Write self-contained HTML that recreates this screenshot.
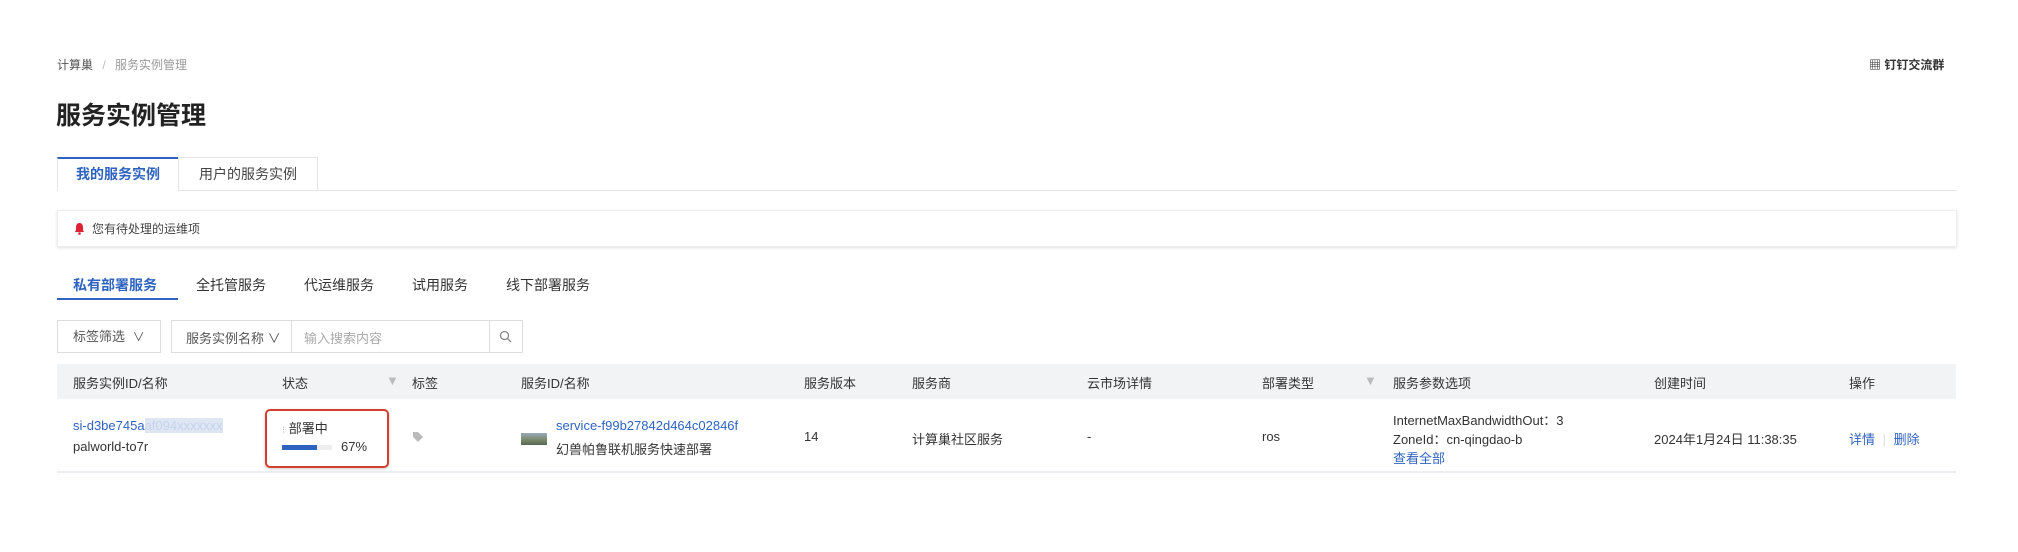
<!DOCTYPE html>
<html><head><meta charset="utf-8"><style>
*{margin:0;padding:0;box-sizing:border-box}
body{width:2018px;height:552px;background:#fff;font-family:"Liberation Sans","Noto Sans CJK SC",sans-serif;color:#333;position:relative;overflow:hidden;font-size:13px}
.a{position:absolute;white-space:nowrap}
.blue{color:#2e63c0}
.gray{color:#888}
</style></head><body>
<div class="a" style="left:57px;top:56px;font-size:12px;color:#555">计算巢 <span style="color:#bbb;margin:0 6px">/</span> <span style="color:#999">服务实例管理</span></div>
<div class="a" style="left:1869px;top:56px;font-size:12px;color:#333;font-weight:bold">▦ 钉钉交流群</div>
<div class="a" style="left:56px;top:96px;font-size:25px;color:#222;font-weight:bold">服务实例管理</div>
<!-- tabs -->
<div class="a" style="left:57px;top:190px;width:1900px;border-top:1px solid #e4e4e4"></div>
<div class="a" style="left:57px;top:157px;width:121px;height:34px;border-top:2px solid #2e63c0;background:#fff;border-left:1px solid #e4e4e4;font-size:14px;text-align:center;line-height:31px;color:#2e63c0;font-weight:bold">我的服务实例</div>
<div class="a" style="left:178px;top:157px;width:140px;height:33px;border:1px solid #e4e4e4;border-bottom:none;font-size:14px;text-align:center;line-height:32px;color:#444">用户的服务实例</div>
<!-- alert -->
<div class="a" style="left:57px;top:210px;width:1900px;height:37px;border:1px solid #eee;box-shadow:0 1px 3px rgba(0,0,0,.12);font-size:12px;line-height:36px;padding-left:34px;color:#444">您有待处理的运维项</div>
<svg class="a" style="left:74px;top:222px" width="11" height="13"><path d="M5.5 1C3 1 2 3 2 5.5V8L1 10h9L9 8V5.5C9 3 8 1 5.5 1z" fill="#d23"/><circle cx="5.5" cy="11.5" r="1.3" fill="#d23"/></svg>
<!-- subtabs -->
<div class="a" style="left:73px;top:275px;font-size:14px;color:#2e63c0;font-weight:bold">私有部署服务</div>
<div class="a" style="left:57px;top:298px;width:121px;height:2px;background:#2e63c0"></div>
<div class="a" style="left:196px;top:275px;font-size:14px">全托管服务</div>
<div class="a" style="left:304px;top:275px;font-size:14px">代运维服务</div>
<div class="a" style="left:412px;top:275px;font-size:14px">试用服务</div>
<div class="a" style="left:506px;top:275px;font-size:14px">线下部署服务</div>
<!-- search -->
<div class="a" style="left:57px;top:320px;width:104px;height:33px;border:1px solid #ddd;font-size:13px;line-height:31px;padding-left:15px;color:#555">标签筛选 <span style="font-size:12px;margin-left:4px">∨</span></div>
<div class="a" style="left:171px;top:320px;width:352px;height:33px;border:1px solid #ddd"></div>
<div class="a" style="left:186px;top:328px;font-size:13px;color:#555">服务实例名称 ∨</div>
<div class="a" style="left:291px;top:320px;height:33px;border-left:1px solid #ddd"></div>
<div class="a" style="left:304px;top:328px;font-size:13px;color:#aaa">输入搜索内容</div>
<div class="a" style="left:489px;top:320px;height:33px;border-left:1px solid #ddd"></div>
<svg class="a" style="left:499px;top:330px" width="13" height="13"><circle cx="5.5" cy="5.5" r="4" fill="none" stroke="#888" stroke-width="1.3"/><line x1="8.5" y1="8.5" x2="12" y2="12" stroke="#888" stroke-width="1.3"/></svg>
<!-- table -->
<div class="a" style="left:57px;top:364px;width:1899px;height:35px;background:#f2f3f5"></div>
<div class="a" style="left:57px;top:471px;width:1899px;border-top:2px solid #eceef1"></div>
<div class="a" style="top:373px;left:0;font-size:13px;color:#333">
<span class="a" style="left:73px">服务实例ID/名称</span>
<span class="a" style="left:282px">状态</span>
<span class="a gray" style="left:386px;color:#bbb">▼</span>
<span class="a" style="left:412px">标签</span>
<span class="a" style="left:521px">服务ID/名称</span>
<span class="a" style="left:804px">服务版本</span>
<span class="a" style="left:912px">服务商</span>
<span class="a" style="left:1087px">云市场详情</span>
<span class="a" style="left:1262px">部署类型</span>
<span class="a" style="left:1364px;color:#bbb">▼</span>
<span class="a" style="left:1393px">服务参数选项</span>
<span class="a" style="left:1654px">创建时间</span>
<span class="a" style="left:1849px">操作</span>
</div>
<div class="a blue" style="left:73px;top:418px">si-d3be745a<span style="color:#c5d3ee;background:#dfe6f3">af094xxxxxxx</span></div>
<div class="a" style="left:73px;top:439px">palworld-to7r</div>
<div class="a" style="left:265px;top:409px;width:124px;height:59px;border:2px solid #d0402c;border-radius:5px;box-shadow:0 1px 3px rgba(0,0,0,.2)"></div>
<div class="a" style="left:282px;top:418px"><span style="color:#bbb;font-size:10px">⁝</span> 部署中</div>
<div class="a" style="left:282px;top:445px;width:50px;height:5px;background:#eee"><div style="width:35px;height:5px;background:#2e63c0"></div></div>
<div class="a" style="left:341px;top:439px">67%</div>
<svg class="a" style="left:412px;top:431px" width="12" height="12"><path d="M1 1h5l5 5-5 5-5-5z" fill="#bbb"/></svg>
<div class="a" style="left:521px;top:433px;width:26px;height:12px;background:linear-gradient(#9ab 0,#786 60%,#565 100%)"></div>
<div class="a blue" style="left:556px;top:418px">service-f99b27842d464c02846f</div>
<div class="a" style="left:556px;top:439px">幻兽帕鲁联机服务快速部署</div>
<div class="a" style="left:804px;top:429px">14</div>
<div class="a" style="left:912px;top:429px">计算巢社区服务</div>
<div class="a" style="left:1087px;top:429px">-</div>
<div class="a" style="left:1262px;top:429px">ros</div>
<div class="a" style="left:1393px;top:410px">InternetMaxBandwidthOut：3</div>
<div class="a" style="left:1393px;top:429px">ZoneId：cn-qingdao-b</div>
<div class="a blue" style="left:1393px;top:448px">查看全部</div>
<div class="a" style="left:1654px;top:429px">2024年1月24日 11:38:35</div>
<div class="a blue" style="left:1849px;top:429px">详情 <span style="color:#ddd;margin:0 4px">|</span> 删除</div>
</body></html>
